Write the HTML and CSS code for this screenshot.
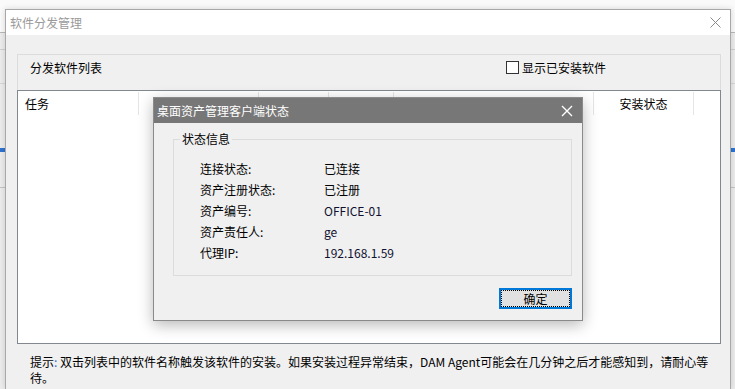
FILE: index.html
```html
<!DOCTYPE html>
<html lang="zh-CN">
<head>
    <meta charset="UTF-8">
    <title>软件分发管理</title>
    <link rel="stylesheet" href="styles.css">
</head>
<body>
    <div class="window">
        <div class="window-title">
            <span>软件分发管理</span>
            <svg class="title-close" width="11" height="11" viewBox="0 0 11 11">
                <path d="M0.5 0.5 L10.5 10.5 M10.5 0.5 L0.5 10.5" stroke="#8a8a8a" stroke-width="1"/>
            </svg>
        </div>

        <div class="window-body">
            <div class="list-toolbar">
                <span class="list-caption">分发软件列表</span>
                <label class="show-installed">
                    <span class="checkbox"></span>显示已安装软件
                </label>
            </div>

            <div class="list-view">
                <div class="list-header">
                    <div class="col col-task">任务</div>
                    <div class="col col-name"></div>
                    <div class="col col-ver"></div>
                    <div class="col col-size"></div>
                    <div class="col col-desc"></div>
                    <div class="col col-state">安装状态</div>
                    <div class="col col-rest"></div>
                </div>
            </div>

            <p class="hint">提示<span class="colon">:</span> 双击列表中的软件名称触发该软件的安装。如果安装过程异常结束，DAM Agent可能会在几分钟之后才能感知到，请耐心等<br>待。</p>
        </div>
    </div>

    <!-- modal status dialog, lies over the main window -->
    <div class="dialog">
        <div class="dialog-title">
            <span>桌面资产管理客户端状态</span>
            <svg class="dialog-close" width="12" height="12" viewBox="0 0 12 12">
                <path d="M1 1 L11 11 M11 1 L1 11" stroke="#ffffff" stroke-width="1.4"/>
            </svg>
        </div>
        <div class="dialog-body">
            <fieldset class="status-box">
                <legend>状态信息</legend>
                <div class="status-grid">
                    <span>连接状态:</span><span>已连接</span>
                    <span>资产注册状态:</span><span>已注册</span>
                    <span>资产编号:</span><span class="latin">OFFICE-01</span>
                    <span>资产责任人:</span><span class="latin">ge</span>
                    <span>代理IP:</span><span class="latin">192.168.1.59</span>
                </div>
            </fieldset>
            <div class="dialog-actions">
                <button class="ok-button">确定</button>
            </div>
        </div>
    </div>
</body>
</html>
```

FILE: styles.css
```css
* {
    box-sizing: border-box;
}

body {
    margin: 0;
    width: 735px;
    height: 389px;
    overflow: hidden;
    position: relative;
    font-family: "Noto Sans CJK SC", "Noto Sans", sans-serif;
    font-size: 12px;
    color: #000;
    background:
        linear-gradient(to bottom,
            #fafafa 0, #fafafa 32px,
            #b8b8b8 32px, #b8b8b8 33px,
            #ececec 33px, #ececec 49px,
            #cfcfcf 49px, #cfcfcf 50px,
            #ececec 50px, #ececec 83px,
            #d6d6d6 83px, #d6d6d6 84px,
            #ececec 84px, #ececec 148px,
            #2f72d0 148px, #2f72d0 152px,
            #ececec 152px, #ececec 187px,
            #c4c4c4 187px, #c4c4c4 188px,
            #ececec 188px);
}

.window {
    margin: 9px 4px 0 5px;
    height: 380px;
    border: 1px solid #a8a8a8;
    border-bottom: none;
    background: #f0f0f0;
    box-shadow: 0 0 6px rgba(0, 0, 0, 0.15);
}

.window-title {
    height: 25px;
    background: #fff;
    display: flex;
    align-items: center;
    justify-content: space-between;
    padding: 0 9px 0 4px;
    color: #9a9a9a;
    line-height: 16px;
}

.window-body {
    padding: 19px 9px 0 11px;
}

.list-toolbar {
    height: 36px;
    border: 1px solid #dcdcdc;
    border-bottom: none;
    display: flex;
    justify-content: space-between;
    align-items: flex-start;
    padding: 4px 114px 0 12px;
    line-height: 17px;
}

.show-installed {
    display: flex;
    align-items: center;
    gap: 3px;
}

.checkbox {
    width: 13px;
    height: 13px;
    border: 1px solid #333;
    background: #fff;
}

.list-view {
    height: 254px;
    border: 1px solid #828790;
    background: #fff;
}

.list-header {
    display: flex;
    margin-top: 1px;
    height: 23px;
    line-height: 23px;
}

.col {
    border-right: 1px solid #e5e5e5;
    text-align: center;
    white-space: nowrap;
    overflow: hidden;
}

.col-task {
    width: 121px;
    text-align: left;
    padding-left: 7px;
}

.col-name { width: 120px; }
.col-ver { width: 70px; }
.col-size { width: 65px; }
.col-desc { width: 200px; }
.col-state { width: 100px; }

.col-rest {
    flex: 1;
    border-right: none;
}

.hint {
    margin: 0;
    padding: 10px 0 0 13px;
    line-height: 16px;
    white-space: nowrap;
}

.colon {
    color: #1e6fd0;
}

/* status dialog */
.dialog {
    position: absolute;
    left: 153px;
    top: 97px;
    width: 430px;
    height: 224px;
    border: 1px solid #8a8a8a;
    background: #f0f0f0;
    box-shadow: 0 4px 14px rgba(0, 0, 0, 0.28);
}

.dialog-title {
    height: 25px;
    background: #777;
    color: #fff;
    display: flex;
    align-items: center;
    justify-content: space-between;
    padding: 0 9px 0 3px;
    line-height: 16px;
}

.dialog-body {
    padding: 9px 10px 0 19px;
}

.status-box {
    margin: 0;
    padding: 0 0 0 6px;
    height: 144px;
    border: 1px solid #dcdcdc;
}

.status-box legend {
    padding: 0 2px;
    line-height: 14px;
}

.status-grid {
    display: grid;
    grid-template-columns: 124px auto;
    grid-auto-rows: 21px;
    align-items: center;
    padding: 12px 0 0 20px;
    line-height: 16px;
}

.latin {
    color: #101030;
}

.dialog-actions {
    display: flex;
    justify-content: flex-end;
    margin-top: 12px;
}

.ok-button {
    width: 73px;
    height: 21px;
    padding: 0;
    border: 2px solid #0078d7;
    background: #e1e1e1;
    outline: 1px dotted #000;
    outline-offset: -3px;
    font-family: "Noto Sans CJK SC", "Noto Sans", sans-serif;
    font-size: 12px;
    line-height: 15px;
    color: #000;
}
```
